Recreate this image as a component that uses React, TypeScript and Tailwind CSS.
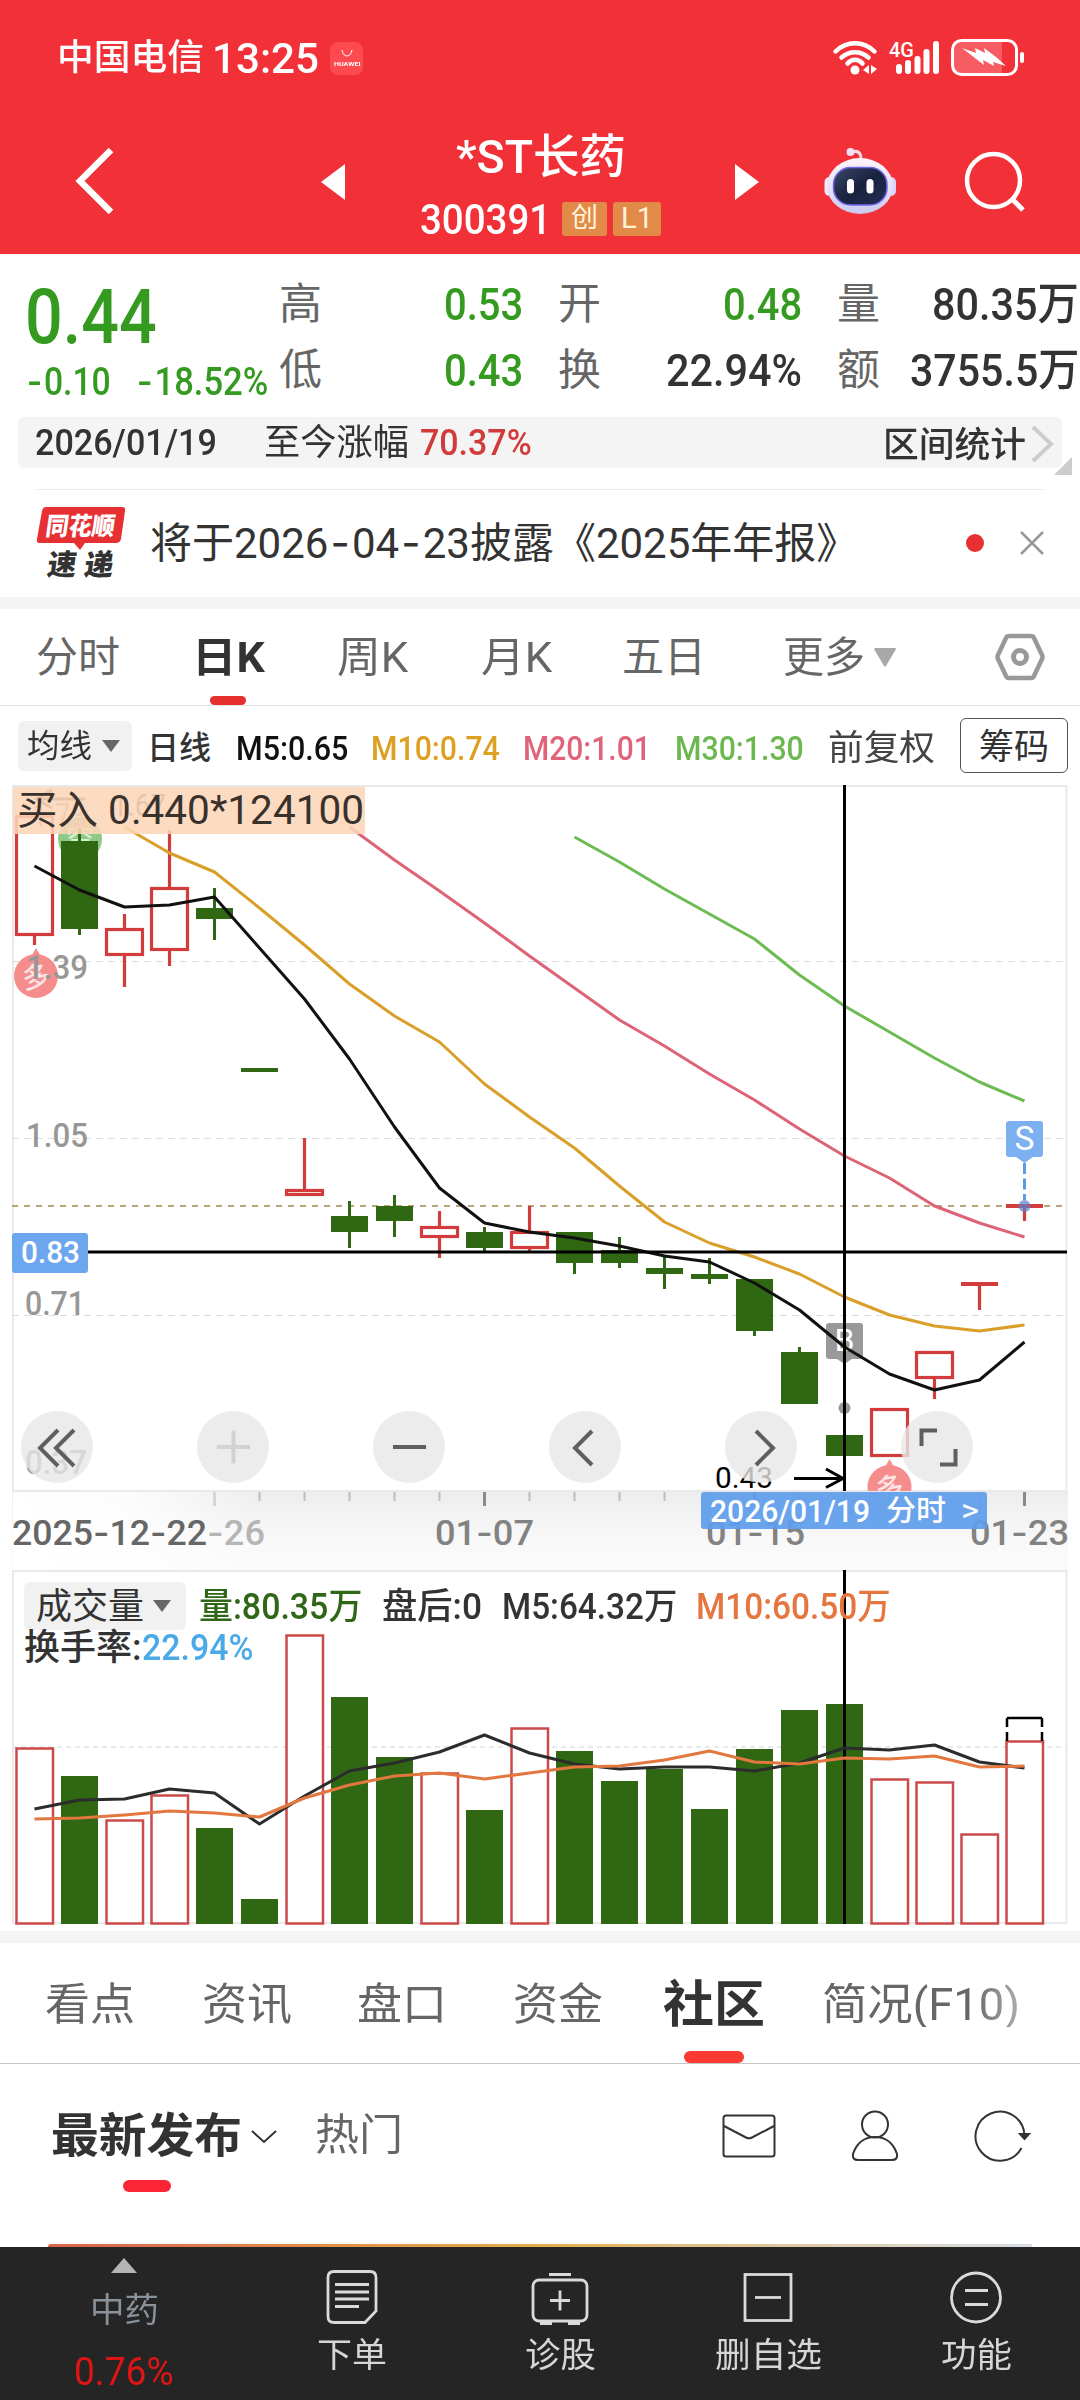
import React, { useLayoutEffect, useRef, useState } from 'react'

const FONT = "font-['Roboto','Noto_Sans_CJK_SC',sans-serif]"

// the hyphen of the interface font is wider than Roboto's
const withDashes = (text: string) =>
  text.split('-').map((part, i) => (
    <React.Fragment key={i}>
      {i > 0 && <span className="font-['Inter'] mx-[0.05em]">-</span>}
      {part}
    </React.Fragment>
  ))

// Stretches or condenses a label to the width of its box
const Fit = ({ text, className = '' }: { text: string; className?: string }) => {
  const box = useRef<HTMLSpanElement>(null)
  const inner = useRef<HTMLSpanElement>(null)
  const [scale, setScale] = useState(1)

  useLayoutEffect(() => {
    if (box.current && inner.current) setScale(box.current.clientWidth / inner.current.offsetWidth)
  }, [text])

  return (
    <span ref={box} className={`block shrink-0 leading-none whitespace-nowrap ${className}`}>
      <span ref={inner} className="inline-block origin-left whitespace-pre" style={{ transform: `scaleX(${scale})` }}>
        {withDashes(text)}
      </span>
    </span>
  )
}

const Label = ({ x, y, w, size, fill, children, weight = 400, opacity = 1 }: any) => (
  <text x={x} y={y} fontSize={size} fill={fill} fontWeight={weight} opacity={opacity} textLength={w} lengthAdjust="spacingAndGlyphs" xmlSpace="preserve">
    {children}
  </text>
)

const StatusBar = () => (
  <div className="flex items-center h-[116px] pl-[57px] text-white">
    <Fit text="中国电信" className="w-[147px] text-[36px] font-medium" />
    <Fit text="13:25" className="w-[107px] ml-[8px] text-[43px] font-medium" />
    <div className="flex flex-col items-center justify-center w-[33px] h-[33px] ml-[11px] rounded-[8px] bg-[#fd4950]">
      <svg width="14" height="8" viewBox="0 0 14 8" fill="none" stroke="#fff" strokeWidth="1"><path d="M2 0c1 8 9 8 10 0" /></svg>
      <Fit text="HUAWEI" className="w-[26px] mt-[3px] text-[6px] font-bold" />
    </div>
    <svg className="ml-[466px]" width="200" height="44" viewBox="829 35 200 44" fill="none" stroke="#fff" strokeLinecap="round">
      <path d="M835.5 50.500c11-11 28-11 39 0M841.500 56.500c8-7 19-7 27 0M847.500 62.500c4-5 11-5 15 0" strokeWidth="4.500" />
      <circle cx="855" cy="69" r="4.500" fill="#fff" stroke="none" />
      <path d="M869 64v9l-6-4zM871 64v9l6-5z" fill="#fff" stroke="none" />
      <text x="889" y="56" fontSize="21" fontWeight="500" fill="#fff" stroke="none" textLength="25" lengthAdjust="spacingAndGlyphs">4G</text>
      <path d="M899 66v4M908 62v8M917.500 58v12M926.500 51v19M936 43v27" strokeWidth="6" />
      <path d="M962 40h40v34h-40q-8 0-8-8v-18q0-8 8-8" fill="#f65c62" stroke="none" />
      <rect x="952.500" y="39.500" width="64" height="34" rx="9" strokeWidth="3" />
      <rect x="1020" y="51" width="4" height="11" rx="2" fill="#fff" stroke="none" />
      <path d="M962 47l14 5-1-5 10 5-1-5 12 9 10 9-13-4 1 4-11-6 1 5z" fill="#fff" stroke="none" />
    </svg>
  </div>
)

const Robot = () => (
  <svg className="ml-[64px]" width="74" height="70" viewBox="824 146 74 70">
    <defs>
      <linearGradient id="shell" x1="0" y1="0" x2="0" y2="1">
        <stop offset="0" stopColor="#fdf4fb" />
        <stop offset="0.6" stopColor="#e4def8" />
        <stop offset="1" stopColor="#c9c8ee" />
      </linearGradient>
      <linearGradient id="visor" x1="0" y1="0" x2="1" y2="1">
        <stop offset="0" stopColor="#3c4869" />
        <stop offset="0.5" stopColor="#19233f" />
        <stop offset="1" stopColor="#222f55" />
      </linearGradient>
    </defs>
    <path d="M853 151c6-2 9 1 9 7" fill="none" stroke="#f5d8ea" strokeWidth="3" />
    <circle cx="851.500" cy="151" r="4" fill="#eedff6" />
    <rect x="825.500" y="176" width="12" height="19" rx="5" fill="#f1eaff" />
    <rect x="885" y="176" width="12" height="19" rx="5" fill="#d6d6fa" />
    <ellipse cx="861" cy="185" rx="33" ry="28" fill="url(#shell)" />
    <rect x="834.500" y="166.500" width="53.500" height="37.500" rx="17" fill="url(#visor)" stroke="#7168e8" strokeWidth="1.500" />
    <rect x="848" y="178" width="7" height="14.500" rx="3.500" fill="#fff" />
    <rect x="867.500" y="178" width="7" height="14.500" rx="3.500" fill="#fff" />
  </svg>
)

const Header = () => (
  <header className="h-[254px] bg-[#f13037]">
    <StatusBar />
    <div className="flex items-center h-[132px]">
      <svg className="ml-[73px]" width="44" height="72" viewBox="73 144 44 72" fill="none" stroke="#fff" strokeWidth="6.500">
        <path d="M111 148l-31 31 31 31" />
      </svg>
      <svg className="ml-[204px]" width="24" height="36" viewBox="0 0 24 36" fill="#fff"><path d="M24 0v36L0 18z" /></svg>
      <div className="ml-[75px] w-[242px] pt-[9px] text-white">
        <Fit text="*ST长药" className="w-[170px] ml-[36px] text-[47px] font-medium" />
        <div className="flex items-center mt-[17px]">
          <Fit text="300391" className="w-[131px] mt-[2px] text-[42px] font-medium" />
          <span className="flex items-center justify-center w-[45px] h-[34px] ml-[11px] rounded-[3px] bg-[#e28b49] text-[#fff3dc] text-[27px] leading-none">创</span>
          <span className="flex items-center justify-center w-[48px] h-[34px] ml-[6px] rounded-[3px] bg-[#e28b49] text-[#fff3dc] text-[29px] leading-none">L1</span>
        </div>
      </div>
      <svg className="ml-[73px]" width="24" height="36" viewBox="0 0 24 36" fill="#fff"><path d="M0 0v36l24-18z" /></svg>
      <Robot />
      <svg className="ml-[66px]" width="66" height="66" viewBox="964 150 66 66" fill="none" stroke="#fff" strokeWidth="4.500">
        <circle cx="994.500" cy="181.500" r="26.500" />
        <path d="M1013 200l11 11" strokeWidth="5" />
      </svg>
    </div>
  </header>
)

const Quote = () => (
  <section className="flex h-[163px]">
    <div className="w-[279px] pt-[25px] pl-[25px] text-[#349a20]">
      <Fit text="0.44" className="w-[132px] text-[76px] font-medium" />
      <div className="flex mt-[7px]">
        <Fit text="-0.10" className="w-[86px] text-[38px] font-medium" />
        <Fit text="-18.52%" className="w-[133px] ml-[24px] text-[38px] font-medium" />
      </div>
    </div>
    <div className="flex flex-col gap-[22px] pt-[28px] text-[#333]">
      <div className="flex items-center h-[44px]">
        <span className="w-[44px] text-[43px] leading-none text-[#666]">高</span>
        <Fit text="0.53" className="w-[79px] ml-[121px] text-[45px] font-medium text-[#349a20]" />
        <span className="w-[44px] ml-[35px] text-[43px] leading-none text-[#666]">开</span>
        <Fit text="0.48" className="w-[79px] ml-[121px] text-[45px] font-medium text-[#349a20]" />
        <span className="w-[44px] ml-[35px] text-[43px] leading-none text-[#666]">量</span>
        <Fit text="80.35万" className="w-[147px] ml-[51px] text-[45px] font-medium" />
      </div>
      <div className="flex items-center h-[44px]">
        <span className="w-[44px] text-[43px] leading-none text-[#666]">低</span>
        <Fit text="0.43" className="w-[79px] ml-[121px] text-[45px] font-medium text-[#349a20]" />
        <span className="w-[44px] ml-[35px] text-[43px] leading-none text-[#666]">换</span>
        <Fit text="22.94%" className="w-[136px] ml-[64px] text-[45px] font-medium" />
        <span className="w-[44px] ml-[35px] text-[43px] leading-none text-[#666]">额</span>
        <Fit text="3755.5万" className="w-[169px] ml-[29px] text-[45px] font-medium" />
      </div>
    </div>
  </section>
)

const RangeBar = () => (
  <section className="relative h-[72px] px-[18px]">
    <div className="flex items-center h-[51px] pl-[17px] rounded-[6px] bg-[#f4f4f4] text-[#333]">
      <Fit text="2026/01/19" className="w-[182px] text-[36px] font-medium" />
      <Fit text="至今涨幅" className="w-[145px] ml-[47px] text-[36px]" />
      <Fit text="70.37%" className="w-[112px] ml-[11px] text-[37px] font-medium text-[#d23b3b]" />
      <Fit text="区间统计" className="w-[143px] ml-[351px] mt-[5px] text-[35px] font-medium" />
      <svg className="ml-[6px] mt-[2px]" width="22" height="38" viewBox="0 0 22 38" fill="none" stroke="#ccc" strokeWidth="4"><path d="M1 2l18 17-18 17" /></svg>
    </div>
    <svg className="absolute right-2 top-[40px]" width="18" height="18" fill="#ccc"><path d="M18 0v18H0z" /></svg>
    <div className="h-px mx-[18px] mt-[21px] bg-[#ececec]" />
  </section>
)

const News = () => (
  <section className="flex items-center h-[108px] pl-[36px] text-[#333]">
    <svg className="mt-[2px]" width="90" height="76" viewBox="36 506 90 76">
      <path d="M46 507h76q4 0 3 4l-4 28q-1 4-5 4h-31l-5 7-6-7h-34q-4 0-3-4l5-28q1-4 4-4" fill="#e63032" />
      <g transform="skewX(-8)" fontWeight="900">
        <text x="120" y="535" fontSize="25" fill="#fff" textLength="69" lengthAdjust="spacingAndGlyphs">同花顺</text>
        <text x="127" y="575" fontSize="29" fill="#333" textLength="66">速递</text>
      </g>
    </svg>
    <Fit text="将于2026-04-23披露《2025年年报》" className="w-[708px] ml-[24px] text-[42px]" />
    <span className="w-[18px] h-[18px] ml-[108px] rounded-full bg-[#e63032]" />
    <svg className="ml-[35px]" width="26" height="26" viewBox="0 0 26 26" stroke="#999" strokeWidth="2.500"><path d="M2 2l22 22M24 2L2 24" /></svg>
  </section>
)

const PeriodTabs = () => (
  <nav className="flex items-center h-[97px] pl-[36px] border-b border-[#e4e4e4] text-[42px] text-[#666]">
    <Fit text="分时" className="w-[84px] mt-[2px]" />
    <div className="relative w-[73px] ml-[72px] mt-[2px]">
      <Fit text="日K" className="w-[73px] font-bold text-[#333]" />
      <div className="absolute left-[18px] top-[59px] w-[36px] h-[9px] rounded-full bg-[#e6302f]" />
    </div>
    <Fit text="周K" className="w-[71px] ml-[72px] mt-[2px]" />
    <Fit text="月K" className="w-[71px] ml-[73px] mt-[2px]" />
    <Fit text="五日" className="w-[84px] ml-[70px] mt-[2px]" />
    <Fit text="更多" className="w-[82px] ml-[77px] mt-[2px]" />
    <svg className="ml-[9px]" width="22" height="19" viewBox="0 0 22 19" fill="#a8a8a8"><path d="M1 0h20q1 0 1 1L12 18q-1 1-2 0L0 1z" /></svg>
    <svg className="ml-[99px]" width="50" height="48" viewBox="0 0 50 48" fill="none" stroke="#999" strokeWidth="4.500" strokeLinejoin="round">
      <path d="M14 3h22q2 0 3 2l8 17q1 2 0 4l-8 17q-1 2-3 2H14q-2 0-3-2L3 26q-1-2 0-4l8-17q1-2 3-2z" />
      <circle cx="25" cy="24" r="6.500" strokeWidth="5" />
    </svg>
  </nav>
)

const Caret = ({ className = '' }: { className?: string }) => (
  <svg className={className} width="18" height="12" viewBox="0 0 18 12" fill="#666"><path d="M0 0h18L9 12z" /></svg>
)

const AverageRow = () => (
  <div className="flex items-center h-[79px] pl-[18px] text-[34px] text-[#333]">
    <div className="flex items-center w-[114px] h-[50px] pl-[9px] rounded-[6px] bg-[#f1f1f1]">
      <Fit text="均线" className="w-[65px] text-[32px]" />
      <Caret className="ml-[10px]" />
    </div>
    <Fit text="日线" className="w-[64px] ml-[15px] mt-[5px] text-[32px] font-medium" />
    <Fit text="M5:0.65" className="w-[112px] ml-[25px] mt-[5px] font-medium text-[#111]" />
    <Fit text="M10:0.74" className="w-[129px] ml-[23px] mt-[5px] font-medium text-[#dda021]" />
    <Fit text="M20:1.01" className="w-[128px] ml-[23px] mt-[5px] font-medium text-[#e0637a]" />
    <Fit text="M30:1.30" className="w-[129px] ml-[24px] mt-[5px] font-medium text-[#6cb74f]" />
    <Fit text="前复权" className="w-[107px] ml-[24px] mt-[6px] text-[35px] text-[#444]" />
    <div className="flex items-center justify-center w-[108px] h-[55px] ml-[25px] rounded-[6px] border border-[#555]">
      <Fit text="筹码" className="w-[70px] mt-[3px] text-[35px]" />
    </div>
  </div>
)

const RED = '#d33c3c'
const GREEN = '#306713'
const cx = (i: number) => 34.5 + i * 45
const line = (ys: number[], from = 0) => ys.map((y, i) => `${cx(i + from)},${y}`).join(' ')

// [up, body top, body bottom, high, low]
const candles: [boolean, number, number, number, number][] = [
  [true, 815, 936, 815, 945],
  [false, 841, 929, 828, 935],
  [true, 928, 956, 914, 987],
  [true, 887, 951, 830, 966],
  [false, 908, 919, 888, 940],
  [false, 1068, 1072, 1068, 1072],
  [true, 1189, 1196, 1138, 1196],
  [false, 1216, 1232, 1201, 1248],
  [false, 1206, 1221, 1195, 1237],
  [true, 1226, 1238, 1211, 1258],
  [false, 1232, 1248, 1227, 1251],
  [true, 1231, 1249, 1206, 1251],
  [false, 1232, 1263, 1232, 1274],
  [false, 1250, 1263, 1237, 1268],
  [false, 1268, 1274, 1256, 1289],
  [false, 1274, 1279, 1258, 1284],
  [false, 1279, 1331, 1279, 1336],
  [false, 1352, 1404, 1347, 1404],
  [false, 1435, 1456, 1435, 1456],
  [true, 1408, 1457, 1408, 1457],
  [true, 1351, 1379, 1351, 1399],
  [true, 1282, 1285, 1282, 1310],
  [true, 1204, 1208, 1204, 1221],
]

const ma5 = [866, 890, 907, 905, 897, 948, 999, 1059, 1127, 1188, 1223, 1232, 1238, 1246, 1256, 1262, 1283, 1310, 1347, 1374, 1390, 1380, 1342]
const ma10 = [827, 853, 872, 908, 945, 984, 1016, 1042, 1084, 1117, 1148, 1186, 1222, 1243, 1257, 1274, 1297, 1315, 1326, 1331, 1325]
const ma20 = [827, 860, 891, 923, 956, 988, 1020, 1046, 1074, 1100, 1129, 1156, 1178, 1206, 1223, 1237]
const ma30 = [837, 862, 889, 914, 939, 975, 1006, 1032, 1058, 1082, 1101]

const Drop = ({ x, y }: { x: number; y: number }) => (
  <g>
    <path d={`M${x} ${y - 28}l5 9h-10z`} fill="#f58d8d" />
    <circle cx={x} cy={y} r="22" fill="#f58d8d" />
    <text x={x - 14} y={y + 11} fontSize="28" fontWeight="500" fill="#fde3e3" transform={`rotate(-10 ${x} ${y})`}>多</text>
  </g>
)

const svgDashes = (text: string) =>
  text.split('-').map((part, i) => (
    <React.Fragment key={i}>
      {i > 0 && <tspan fontFamily="Inter">-</tspan>}
      {part}
    </React.Fragment>
  ))

const PriceChart = () => (
  <div className="relative h-[785px]">
    <svg className="block" width="1080" height="785" viewBox="0 785 1080 785">
      <defs>
        <linearGradient id="axis" x1="0" y1="0" x2="0" y2="1">
          <stop offset="0" stopColor="#ededed" />
          <stop offset="0.6" stopColor="#f8f8f8" />
          <stop offset="1" stopColor="#fbfbfb" />
        </linearGradient>
        <linearGradient id="fade" x1="0" y1="0" x2="1" y2="0">
          <stop offset="0" stopColor="#fff" />
          <stop offset="0.45" stopColor="#fff" stopOpacity="0.850" />
          <stop offset="1" stopColor="#fff" stopOpacity="0" />
        </linearGradient>
        <clipPath id="plot"><rect x="12" y="785" width="1056" height="706" /></clipPath>
        <clipPath id="tail"><rect x="207" y="1500" width="100" height="60" /></clipPath>
      </defs>

      <rect x="12" y="1491" width="1056" height="80" fill="url(#axis)" />
      <rect x="13" y="1492" width="250" height="78" fill="url(#fade)" />
      <rect x="13" y="786" width="1053.500" height="705" fill="#fff" stroke="#e9e9e9" strokeWidth="2" />
      {[961.5, 1138.5, 1315.5].map((y) => (
        <path key={y} d={`M12 ${y}H1066`} stroke="#dedede" strokeWidth="1.200" strokeDasharray="7 5" />
      ))}
      <path d="M12 1206H1066" stroke="#b8a678" strokeWidth="2" strokeDasharray="6 6" />

      <g clipPath="url(#plot)">
        <Drop x={36} y={976} />
        <Drop x={889.5} y={1487} />
      </g>
      <circle cx="80" cy="839" r="22" fill="#8fcb88" />
      <text x="66" y="849" fontSize="28" fill="#d8f0d4">空</text>

      <Label x={26} y={979} w={62} size={34} weight={500} fill="#979797">1.39</Label>
      <Label x={26} y={1147} w={62} size={34} weight={500} fill="#979797">1.05</Label>
      <Label x={25} y={1315} w={60} size={34} weight={500} fill="#979797">0.71</Label>
      <Label x={25} y={1474} w={62} size={34} weight={500} fill="#979797">0.37</Label>
      <Label x={32} y={827} w={54} size={34} fill="#999">1.73</Label>
      <Label x={112} y={816} w={54} size={31} fill="#555">1.67</Label>
      <path d="M52 790l-16 9 16 9M36 799h49" fill="none" stroke="#555" strokeWidth="3" />

      {candles.map(([up, top, bottom, high, low], i) => {
        const x = cx(i)
        if (!up) {
          return (
            <g key={i} fill={GREEN}>
              <rect x={x - 1.5} y={high} width="3" height={low - high} />
              <rect x={x - 18.5} y={top} width="37" height={bottom - top} />
            </g>
          )
        }
        return (
          <g key={i} fill="none" stroke={RED} strokeWidth="3.200">
            <path d={`M${x} ${high}V${top}M${x} ${bottom}V${low}`} />
            {bottom - top > 5
              ? <rect x={x - 18} y={top + 1.5} width="36" height={bottom - top - 3} />
              : <path d={`M${x - 18.5} ${top + 2}h37`} strokeWidth="4" />}
          </g>
        )
      })}

      <g fill="#999">
        <rect x="826" y="1323" width="37" height="36" rx="3" />
        <path d="M837 1359h15l-7.500 5z" />
        <circle cx="844.500" cy="1408" r="6" />
        <text x="834.500" y="1351" fontSize="31" fill="#fff" textLength="20" lengthAdjust="spacingAndGlyphs">B</text>
      </g>
      <g fill="#7cb0f1">
        <rect x="1006" y="1121" width="37" height="36" rx="3" />
        <path d="M1016 1157h17l-8.500 6z" />
        <path d="M1024.500 1163v37" stroke="#5b9ae5" strokeWidth="3" strokeDasharray="11 4.500" />
        <circle cx="1024.500" cy="1206" r="6" fill="#5c7fcc" fillOpacity="0.700" />
        <text x="1014.500" y="1150" fontSize="33" fill="#fff" textLength="20" lengthAdjust="spacingAndGlyphs">S</text>
      </g>

      <g fill="none" strokeWidth="3" strokeLinejoin="round">
        <polyline points={line(ma30, 12)} stroke="#6dbb52" />
        <polyline points={line(ma20, 7)} stroke="#dd6377" />
        <polyline points={line(ma10, 2)} stroke="#d99f28" />
        <polyline points={line(ma5)} stroke="#111" />
      </g>

      <Label x={715} y={1488} w={58} size={30} fill="#000">0.43</Label>
      <path d="M794 1478.500h49M826 1469l17 9.500-17 9" fill="none" stroke="#000" strokeWidth="3" />

      {/* date axis */}
      {candles.map((_, i) => {
        if (i < 4) return null
        const major = i % 6 === 4
        return <path key={i} d={`M${cx(i)} 1492v${major ? 14 : 9}`} stroke={major ? (i === 4 ? '#d5d5d5' : '#8a8a8a') : '#bdbdbd'} strokeWidth={major ? 3 : 2} />
      })}
      <Label x={12} y={1545} w={195} size={35} weight={500} fill="#666">{svgDashes('2025-12-22')}</Label>
      <g clipPath="url(#tail)"><Label x={166} y={1545} w={99} size={35} weight={500} fill="#b5b5b5">{svgDashes('12-26')}</Label></g>
      <Label x={435} y={1545} w={99} size={35} weight={500} fill="#828282">{svgDashes('01-07')}</Label>
      <Label x={706} y={1545} w={99} size={35} weight={500} fill="#828282">{svgDashes('01-15')}</Label>
      <Label x={970} y={1545} w={99} size={35} weight={500} fill="#828282">{svgDashes('01-23')}</Label>

      {/* crosshair */}
      <path d="M844.500 785V1491M88 1252H1067" stroke="#000" strokeWidth="3" />
      <rect x="12" y="1233" width="76" height="40" rx="3" fill="#6ca6ee" />
      <Label x={21} y={1263} w={59} size={31} weight={500} fill="#fff">0.83</Label>
      <rect x="701" y="1492" width="286" height="37" rx="3" fill="#5e9dec" fillOpacity="0.930" />
      <Label x={710} y={1522} w={160} size={32} weight={500} fill="#fff">2026/01/19</Label>
      <Label x={886} y={1521} w={60} size={29} weight={500} fill="#fff">分时</Label>
      <Label x={961} y={1521} w={18} size={31} fill="#fff">&gt;</Label>

      <rect x="13" y="787" width="352" height="47" fill="#fdd6b8" fillOpacity="0.870" />
      <Label x={17} y={824} w={347} size={40} fill="#38312c">买入 0.440*124100</Label>
    </svg>

    <div className="absolute left-[21px] top-[626px] flex gap-[104px]">
      {[
        'M37 19L19 37l18 18M53 19L35 37l18 18',
        'M20 36h33M36.500 19.500v33',
        'M20 36h33',
        'M43 20L26 37l17 17',
        'M31 20l17 17-17 17',
        'M36 19.500H20.500V35M39 53.500H54.500V38',
      ].map((d, i) => (
        <div key={d} className="w-[72px] h-[72px] rounded-full bg-[#e7e7e7]/80">
          <svg width="72" height="72" viewBox="0 0 72 72" fill="none" stroke={i === 1 ? '#d2d2d2' : '#5f5f5f'} strokeWidth="4"><path d={d} /></svg>
        </div>
      ))}
    </div>
  </div>
)

const volumeTops = [1748, 1776, 1820, 1795, 1828, 1899, 1635, 1697, 1757, 1773, 1810, 1728, 1751, 1781, 1769, 1809, 1749, 1710, 1704, 1779, 1782, 1834, 1741]
const vol5 = [1809, 1800, 1799, 1789, 1793, 1824, 1796, 1771, 1763, 1752, 1735, 1753, 1764, 1769, 1767, 1767, 1771, 1763, 1748, 1750, 1745, 1762, 1768]
const vol10 = [1819, 1818, 1815, 1811, 1813, 1817, 1798, 1785, 1776, 1773, 1779, 1773, 1767, 1766, 1760, 1751, 1762, 1764, 1758, 1759, 1756, 1767, 1766]

const VolumeChart = () => (
  <div className="relative h-[361px]">
    <svg className="block" width="1080" height="361" viewBox="0 1570 1080 361">
      <rect x="13" y="1571" width="1053.500" height="352" fill="#fff" stroke="#e9e9e9" strokeWidth="2" />
      <path d="M12 1747H1066" stroke="#e2e2e2" strokeWidth="1.500" strokeDasharray="5 4" />
      {volumeTops.map((top, i) =>
        candles[i][0] ? (
          <rect key={i} x={cx(i) - 18} y={top + 0.5} width="36.500" height={1923 - top} fill="#fff" stroke="#cb4a4b" strokeWidth="2.500" />
        ) : (
          <rect key={i} x={cx(i) - 18.5} y={top} width="37" height={1924 - top} fill={GREEN} />
        )
      )}
      <path d="M1007 1741v-9M1007 1727v-9M1007 1718h35M1042 1718v9M1042 1732v9" fill="none" stroke="#000" strokeWidth="2.500" />
      <path d="M844.500 1570V1924" stroke="#000" strokeWidth="3" />
      <g fill="none" strokeWidth="3" strokeLinejoin="round">
        <polyline points={line(vol5)} stroke="#2c2c2c" />
        <polyline points={line(vol10)} stroke="#e2773f" />
      </g>
    </svg>
    <div className="absolute left-[24px] top-[12px] text-[36px] text-[#333]">
      <div className="flex items-center h-[48px]">
        <div className="flex items-center w-[162px] h-[48px] pl-[12px] rounded-[6px] bg-[#f1f1f1]">
          <Fit text="成交量" className="w-[108px] mt-[2px]" />
          <Caret className="ml-[9px]" />
        </div>
        <Fit text="量:80.35万" className="w-[163px] ml-[13px] mt-[2px] font-medium text-[#2f6717]" />
        <Fit text="盘后:0" className="w-[100px] ml-[20px] mt-[2px] font-medium" />
        <Fit text="M5:64.32万" className="w-[175px] ml-[20px] mt-[2px] font-medium" />
        <Fit text="M10:60.50万" className="w-[195px] ml-[19px] mt-[2px] font-medium text-[#e6763f]" />
      </div>
      <div className="flex">
        <Fit text="换手率:" className="w-[118px] font-medium" />
        <Fit text="22.94%" className="w-[111px] font-medium text-[#4aa9e6]" />
      </div>
    </div>
  </div>
)

const SectionTabs = () => (
  <nav className="flex items-center h-[121px] pl-[45px] pt-[3px] border-b border-[#c6c6c6] text-[44px] text-[#666]">
    <Fit text="看点" className="w-[90px]" />
    <Fit text="资讯" className="w-[90px] ml-[67px]" />
    <Fit text="盘口" className="w-[90px] ml-[65px]" />
    <Fit text="资金" className="w-[90px] ml-[66px]" />
    <div className="relative w-[102px] ml-[60px]">
      <Fit text="社区" className="w-[102px] text-[50px] font-bold text-[#333]" />
      <div className="absolute left-[21px] top-[71px] w-[60px] h-[12px] rounded-full bg-[#f93a31]" />
    </div>
    <Fit text="简况(F10)" className="w-[198px] ml-[57px] [mask-image:linear-gradient(to_right,#000_75%,#0008)]" />
  </nav>
)

const Community = () => (
  <section className="h-[183px]">
    <div className="flex items-center h-[141px] pl-[51px] text-[#333]">
      <div className="relative">
        <Fit text="最新发布" className="w-[191px] mt-[2px] text-[47px] font-bold" />
        <div className="absolute left-[72px] top-[70px] w-[48px] h-[12px] rounded-full bg-[#fb2536]" />
      </div>
      <svg className="ml-[8px] mt-[5px]" width="28" height="16" viewBox="0 0 28 16" fill="none" stroke="#333" strokeWidth="2"><path d="M2 2l12 11L26 2" /></svg>
      <Fit text="热门" className="w-[88px] ml-[37px] mt-[2px] text-[43px] text-[#666]" />
      <svg className="ml-[318px]" width="310" height="54" viewBox="721 2108 310 54" fill="none" stroke="#333" strokeWidth="2">
        <rect x="723.500" y="2115.500" width="51" height="41" rx="2.500" />
        <path d="M724 2126l22 11.500q3 1.500 6 0l22-11.500" />
        <ellipse cx="875" cy="2124.500" rx="13" ry="13" />
        <path d="M875 2137c12 0 19 8 22 17q1 6-5 6h-34q-6 0-5-6c3-9 10-17 22-17z" />
        <path d="M1024.500 2135a24.500 24.500 0 1 0-3 13" />
        <path d="M1020 2134h9l-4.500 5z" fill="#333" />
      </svg>
    </div>
    <div className="h-[39px]" />
    <div className="h-[3px] mx-[48px] rounded-tl-[3px] bg-gradient-to-r from-[#d9634a] via-[#e3ad49] to-[#d8dfe8]" />
  </section>
)

const NavItem = ({ text, width, children }: { text: string; width: string; children: React.ReactNode }) => (
  <div className="flex flex-col items-center w-[208px]">
    <svg className="mt-[20px]" width="60" height="60" viewBox="0 0 60 60" fill="none" stroke="#dadada" strokeWidth="2.800">{children}</svg>
    <Fit text={text} className={`mt-[11px] text-[34px] text-[#d6d6d6] ${width}`} />
  </div>
)

const BottomNav = () => (
  <footer className="flex h-[153px] bg-[#252525]">
    <div className="flex flex-col items-center w-[248px]">
      <svg className="mt-[11px]" width="26" height="15" viewBox="0 0 26 15" fill="#b5b5b5"><path d="M0 15L13 0l13 15z" /></svg>
      <Fit text="中药" className="w-[69px] mt-[20px] text-[34px] text-[#89929a]" />
      <Fit text="0.76%" className="w-[100px] mt-[26px] text-[39px] text-[#de1515]" />
    </div>
    <NavItem text="下单" width="w-[70px]">
      <path d="M12 4.500h36q6 0 6 6V44L43 55.500H12q-6 0-6-6v-39q0-6 6-6z" />
      <path d="M13 17.500h34M13 25h34M13 32h34M13 39.500h24" />
    </NavItem>
    <NavItem text="诊股" width="w-[71px]">
      <rect x="3" y="13" width="54" height="41" rx="6" />
      <path d="M19 7.500h22M10 56.500h12M38 56.500h12M20 33.500h20M30 23.500v20" />
    </NavItem>
    <NavItem text="删自选" width="w-[107px]">
      <rect x="7" y="7.500" width="46" height="46" />
      <path d="M17 30.500h26" />
    </NavItem>
    <NavItem text="功能" width="w-[71px]">
      <circle cx="30" cy="30.500" r="24.500" />
      <path d="M19 23.500h23M19 37.500h23" />
    </NavItem>
  </footer>
)

const App = () => {
  return (
    <div className={`w-[1080px] h-[2400px] overflow-hidden bg-white ${FONT}`}>
      <Header />
      <Quote />
      <RangeBar />
      <News />
      <div className="h-[12px] bg-[#f4f4f4]" />
      <PeriodTabs />
      <AverageRow />
      <PriceChart />
      <VolumeChart />
      <div className="h-[12px] bg-[#f4f4f4]" />
      <SectionTabs />
      <Community />
      <BottomNav />
    </div>
  )
}

export default App
